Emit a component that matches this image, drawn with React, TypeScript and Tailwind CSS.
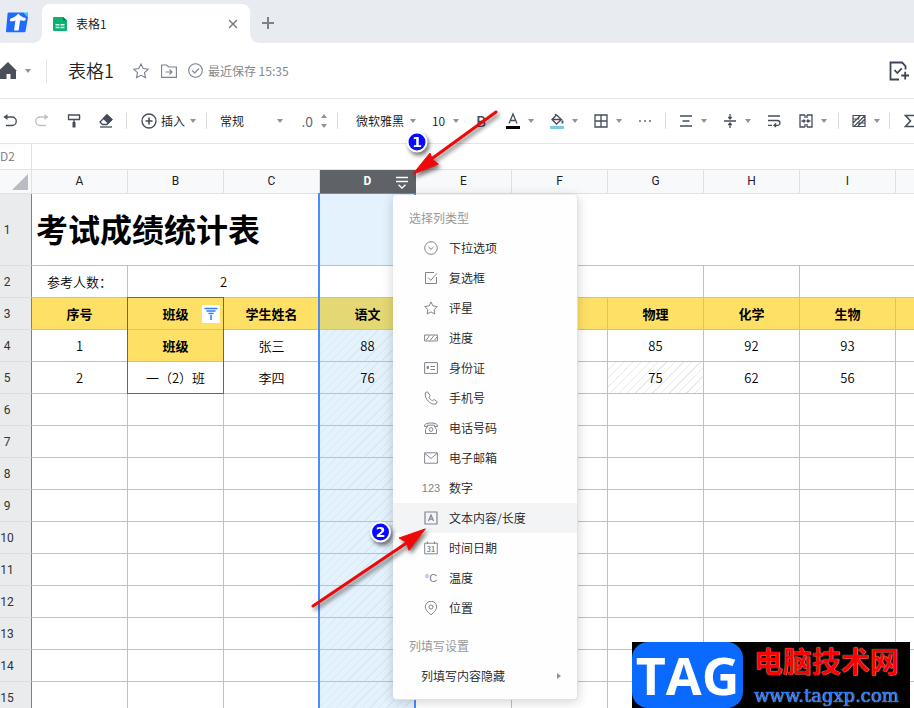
import React from "react";

const columns = ["A", "B", "C", "D", "E", "F", "G", "H", "I", ""];
const emptyRows = [6, 7, 8, 9, 10, 11, 12, 13, 14, 15];

const cell = "border-r border-b border-[#c0c0c0] p-0 text-center";
const yellow = "bg-[#ffe066] font-bold";
const hatchBlue =
  "bg-[#e4f2fd] bg-[repeating-linear-gradient(135deg,transparent_0_5px,#d9e7f1_5px_6px)]";
const hatchGray =
  "bg-[repeating-linear-gradient(135deg,transparent_0_5px,#eaeaea_5px_6px)]";

function Icon({ size = 20, className = "", children }: any) {
  return (
    <svg
      width={size}
      height={size}
      viewBox={`0 0 ${size} ${size}`}
      fill="none"
      stroke="currentColor"
      strokeWidth="1.3"
      className={`shrink-0 ${className}`}
      aria-hidden="true"
    >
      {children}
    </svg>
  );
}

function Caret() {
  return (
    <svg width="6" height="4" viewBox="0 0 6 4" className="shrink-0 fill-[#8f9296]" aria-hidden="true">
      <path d="M0 0h6L3 4z" />
    </svg>
  );
}

function Tool({ label, drop = false, className = "", children }: any) {
  return (
    <button aria-label={label} className={`flex shrink-0 items-center text-[#464d5a] ${className}`}>
      <Icon>{children}</Icon>
      {drop && (
        <span className="flex w-3 justify-end pr-px">
          <Caret />
        </span>
      )}
    </button>
  );
}

function Pick({ label, value, width }: any) {
  return (
    <label className={`relative flex shrink-0 items-center ${width}`}>
      <select aria-label={label} className="w-full appearance-none bg-transparent text-xs text-[#111]">
        <option>{value}</option>
      </select>
      <span className="pointer-events-none absolute right-0">
        <Caret />
      </span>
    </label>
  );
}

function Divider() {
  return <span className="-mx-0.5 h-4 w-px shrink-0 bg-[#d9dbde]" />;
}

/* tabs on top */
function TabBar() {
  return (
    <nav className="flex h-[43px] shrink-0 items-end bg-[#e8ebef]">
      <svg width="24" height="22" viewBox="0 0 24 22" className="mb-2.5 ml-[5px] shrink-0" aria-label="Docs">
        <path d="M3.500 1.500h15L23 6l-2.500 14.500a1 1 0 0 1-1 .8H2a1 1 0 0 1-1-1.200L2.600 2.300z" fill="#1f6bff" />
        <path d="M18.500 1.500h4.500V6z" fill="#19d2ee" />
        <path d="M13.300 2.500C11 5.500 8 7 5.200 7.800L5 10.300c2 .1 3.800-.2 5.400-.9L9 19.500h4.600l1.500-10.200c1.600.4 3.200.5 5.200.2l.4-2.400c-3-.6-5.500-2-7.400-4.600z" fill="#fff" />
      </svg>
      <div className="relative ml-[13px] flex h-[39px] w-52 items-center rounded-t-lg bg-white pr-3 pl-3">
        <span className="absolute bottom-0 -left-2 size-2 bg-[radial-gradient(circle_at_0_0,transparent_7px,white_8px)]" />
        <span className="absolute -right-2 bottom-0 size-2 bg-[radial-gradient(circle_at_100%_0,transparent_7px,white_8px)]" />
        <svg width="14" height="14" viewBox="0 0 14 14" className="-ml-px shrink-0" aria-hidden="true">
          <path d="M0 1a1 1 0 0 1 1-1h9l4 3.500V13a1 1 0 0 1-1 1H1a1 1 0 0 1-1-1z" fill="#0bb171" />
          <path d="M10 0l4 3.500h-4z" fill="#067f50" />
          <path d="M2.500 7h4v1.500h-4zM7.500 7h4v1.500h-4zM2.500 9.800h4v1.500h-4zM7.500 9.800h4v1.500h-4z" fill="#d7fbe9" />
        </svg>
        <a href="#sheet" className="ml-[9px] flex-1 text-xs text-[#111]">表格1</a>
        <button aria-label="关闭" className="text-[#6f757f]">
          <Icon size={10}>
            <path d="M1 1l8 8M9 1l-8 8" />
          </Icon>
        </button>
      </div>
      <button aria-label="新建" className="mb-3.5 ml-3 text-[#7d8087]">
        <Icon size={12}>
          <path d="M6 0v12M0 6h12" strokeWidth="2" />
        </Icon>
      </button>
    </nav>
  );
}

function TitleBar() {
  return (
    <header className="flex h-14 shrink-0 items-center border-b border-[#e4e5e8] text-[#7b828d]">
      <button aria-label="首页" className="flex items-center">
        <svg width="17" height="18" viewBox="0 0 17 18" aria-hidden="true">
          <path d="M8 0 17 9h-1v8h-5.500v-5h-4v5H0V7.500z" fill="#4a4f5a" />
        </svg>
        <span className="ml-2">
          <Caret />
        </span>
      </button>
      <span className="ml-[15px] h-6 w-px bg-[#e2e3e6]" />
      <h1 className="ml-[21px] pb-0.5 text-lg leading-6 text-[#222]">表格1</h1>
      <button aria-label="收藏" className="ml-[19px]">
        <Icon size={16}>
          <path d="M8 .9l2.200 4.700 5.100.6-3.800 3.500 1 5.100L8 12.300l-4.500 2.500 1-5.100L.7 6.200l5.100-.6z" strokeWidth="1.100" />
        </Icon>
      </button>
      <button aria-label="移动" className="ml-3">
        <Icon size={16}>
          <path d="M.6 2h5l2 2h7.800v10.400H.6zM4.500 9h6.500M8.500 6.500 11 9l-2.500 2.500" strokeWidth="1.100" />
        </Icon>
      </button>
      <Icon size={15} className="ml-[11px]">
        <circle cx="7.500" cy="7.500" r="6.800" strokeWidth="1.100" />
        <path d="M4.200 7.500l2.500 2.500 4.300-4.500" strokeWidth="1.100" />
      </Icon>
      <span className="ml-[5px] text-xs font-normal text-[#85888e]">最近保存 15:35</span>
      <button aria-label="添加任务" className="mr-[5px] ml-auto text-[#3d4455]">
        <Icon>
          <path d="M10 18.500H1.500v-17H13l3.500 3.500v3.500M5.500 9l2.800 3 4.500-4.700M12.300 14.500H20M16.200 10.700V18.500" strokeWidth="1.800" />
        </Icon>
      </button>
    </header>
  );
}

function Toolbar() {
  return (
    <div className="flex h-[45px] shrink-0 items-center gap-3 overflow-hidden border-b border-[#e4e5e8]">
      <Tool label="撤销">
        <path d="M4.500 6H12a4.200 4.200 0 0 1 0 8.500H6" />
        <path d="M3.500 6 7.500 3v6z" fill="currentColor" strokeWidth="0" />
      </Tool>
      <Tool label="重做" className="opacity-35">
        <path d="M15.500 6H8a4.200 4.200 0 0 0 0 8.500h6" />
        <path d="M16.500 6 12.500 3v6z" fill="currentColor" strokeWidth="0" />
      </Tool>
      <Tool label="格式刷">
        <path d="M4.500 4h11v4.500h-11zM10 8.500V11M15.500 6h.9" />
        <path d="M8.500 11h3v5.500h-3z" fill="currentColor" strokeWidth="0" />
      </Tool>
      <Tool label="清除格式">
        <path d="M4 11l7-7 4.800 4.500-5 5H6.500z" />
        <path d="M7.500 7.500l3.500-3.500 4.800 4.500-3.500 3.500z" fill="currentColor" />
        <path d="M4 16h12" />
      </Tool>
      <Divider />
      <button className="ml-0.5 flex shrink-0 items-center text-xs text-[#111]">
        <Icon className="text-[#464d5a]">
          <circle cx="10" cy="10" r="7" />
          <path d="M10 6.500v7M6.500 10h7" strokeWidth="1.600" />
        </Icon>
        <span className="mr-[5px] ml-0.5">插入</span>
        <Caret />
      </button>
      <Divider />
      <div className="ml-[3px] flex shrink-0">
        <Pick label="数字格式" value="常规" width="w-[63px]" />
      </div>
      <div className="flex shrink-0 items-center gap-2">
        <button className="w-[18px] text-right text-sm text-[#555b66]">.0</button>
        <button aria-label="小数位数" className="flex w-1.5 flex-col items-center gap-1.5">
          <span className="rotate-180">
            <Caret />
          </span>
          <Caret />
        </button>
      </div>
      <Divider />
      <div className="ml-2 flex shrink-0">
        <Pick label="字体" value="微软雅黑" width="w-[60px]" />
      </div>
      <div className="ml-1 flex shrink-0">
        <Pick label="字号" value="10" width="w-[27px]" />
      </div>
      <button className="w-5 shrink-0 text-[15px] font-medium text-[#464d5a]">B</button>
      <Tool label="字体颜色" drop>
        <path d="M6 12.500 10 3l4 9.500M7.300 9.500h5.400" />
        <path d="M3 16.500h14" stroke="#000" strokeWidth="3" />
      </Tool>
      <Tool label="填充颜色" drop>
        <path d="M5 8.500 9.500 4l5 4.500-5 4.500zM5 8.500h9.500M9 4.500 8 3" />
        <path d="M15.500 9.500v3" strokeWidth="1.800" />
        <path d="M3 16.500h14" stroke="#7ccbe4" strokeWidth="3" />
      </Tool>
      <Tool label="边框" drop>
        <path d="M4 4h12v12H4zM10 4v12M4 10h12" />
      </Tool>
      <Tool label="更多">
        <path d="M4 10h2M9 10h2M14 10h2" strokeWidth="2" stroke="#8a8e96" />
      </Tool>
      <Divider />
      <Tool label="水平对齐" drop>
        <path d="M4 5h12M6.500 10h7M4 15h12" strokeWidth="1.500" />
      </Tool>
      <Tool label="垂直对齐" drop>
        <path d="M4 10h12M10 3v5M8.300 6 10 8l1.700-2M10 17v-5M8.300 14 10 12l1.700 2" />
      </Tool>
      <Tool label="自动换行">
        <path d="M4 5h12M4 9.500h9.500a2.400 2.400 0 0 1 0 4.800H10M12 12.500l-2 1.800 2 1.800M4 14.300h4" />
      </Tool>
      <Tool label="合并单元格" drop>
        <path d="M9 4H4v12h5M11 4h5v12h-5M9 4v3M9 13v3M11 4v3M11 13v3M5.500 10H9M7.500 8.500 9 10l-1.500 1.500M14.500 10H11M12.500 8.500 11 10l1.500 1.500" />
      </Tool>
      <Divider />
      <Tool label="条件格式" drop>
        <path d="M4 4.500h12v11H4zM4 8h6M10 12h6M10 4.500v3M10 12v3.500M4 12l7.500-7.500M5 15.500l11-11M8.500 15.500 16 8" strokeWidth="1.200" />
      </Tool>
      <span className="-ml-1 h-4 w-px shrink-0 bg-[#d9dbde]" />
      <Tool label="求和" className="-ml-0.5">
        <path d="M15.500 6.500V4.500h-10l5 5.500-5 5.500h10v-2" strokeWidth="1.600" />
      </Tool>
    </div>
  );
}

const menuItems = [
  { name: "下拉选项", icon: <><circle cx="7" cy="7" r="6.300" /><path d="M4.500 6 7 8.300 9.500 6" /></> },
  { name: "复选框", icon: <path d="M12.500 6v6.500h-11v-11H10M4 6.500 6.800 9.300l6.200-7" /> },
  { name: "评星", icon: <path d="M7 .9l1.900 4 4.400.6-3.200 3.100.8 4.400L7 10.900 3.100 13l.8-4.400L.7 5.500l4.400-.6z" /> },
  { name: "进度", icon: <path d="M.6 4h12.800v6H.6zM2 9.500l3.500-5M6 9.500l4-5M10.500 9 13 6" /> },
  { name: "身份证", icon: <><path d="M.6 1.600h12.800v10.800H.6zM6.500 5.500h4.500M6.500 8.500h4.500" /><path d="M3 5.500h1.500v2H3z" fill="currentColor" /></> },
  { name: "手机号", icon: <path d="M3.600.8 1.400 1.700C.6 4.500 2 8 4.300 10.200 6.500 12.400 9 13.700 12 13l1.200-2.300-3-2.200-1.700 1.200C6.800 9 5.600 7.700 5 6.200l1.200-1.500z" /> },
  { name: "电话号码", icon: <><path d="M.6 5.500V4C2 1.300 12 1.300 13.400 4v1.500h-2.800V4.200H3.400v1.300zM3.400 5.500 1.500 8.500v4h11v-4l-1.900-3" /><circle cx="7" cy="8.500" r="1.900" /></> },
  { name: "电子邮箱", icon: <path d="M.6 1.800h12.800v10.400H.6zM1 2.500l6 5 6-5" /> },
  { name: "数字", text: "123" },
  { name: "文本内容/长度", icon: <path d="M1 1h12v12H1zM4.500 10 7 4l2.500 6M5.300 8.200h3.400" strokeWidth="1.200" /> },
  { name: "时间日期", icon: <><path d="M.7 2.200h12.600v10.600H.7zM3.500.5v2.500M10.500.5v2.500" /><text x="7" y="10.500" fontSize="7" fontWeight="bold" textAnchor="middle" fill="currentColor" stroke="none">31</text></> },
  { name: "温度", text: "°C" },
  { name: "位置", icon: <><path d="M7 13.800C3.500 10.800 1.300 8.500 1.300 5.900a5.700 5.700 0 0 1 11.400 0c0 2.600-2.200 4.900-5.700 7.900z" /><circle cx="7" cy="6" r="2" /></> },
];

function TypeMenu() {
  return (
    <div
      role="menu"
      className="absolute top-px left-[393px] w-[185px] rounded-sm border-r border-b border-[#e1e2e4] bg-[#fefefe] py-2 text-xs text-[#202124] shadow-[0_2px_12px_rgba(0,0,0,0.18)]"
    >
      <div className="h-[30px] pl-4 leading-[30px] font-normal text-[#999]">选择列类型</div>
      {menuItems.map((item) => (
        <button
          key={item.name}
          role="menuitem"
          className={`flex h-[30px] w-full items-center gap-[11px] pl-[31px] ${item.name === "文本内容/长度" ? "bg-[#f2f4f6]" : ""}`}
        >
          <span className="flex w-3.5 shrink-0 justify-center text-[#80858e]">
            {item.text ? (
              <span className="font-['Liberation_Sans'] text-[11px]">{item.text}</span>
            ) : (
              <svg width="14" height="14" viewBox="0 0 14 14" fill="none" stroke="currentColor" strokeWidth="1" aria-hidden="true">
                {item.icon}
              </svg>
            )}
          </span>
          {item.name}
        </button>
      ))}
      <div className="mt-2 h-[30px] pl-4 leading-[30px] font-normal text-[#999]">列填写设置</div>
      <button role="menuitem" className="flex h-[30px] w-full items-center justify-between pr-4 pl-7">
        列填写内容隐藏
        <svg width="4" height="6" viewBox="0 0 4 6" className="fill-[#8f9296]" aria-hidden="true">
          <path d="M0 0l4 3-4 3z" />
        </svg>
      </button>
    </div>
  );
}

function RowHead({ n }: { n: number }) {
  return (
    <th
      scope="row"
      className="border-r border-b border-r-[#4a86f0] border-b-[#dcdee1] bg-[#e9ebed] p-0 text-left font-[Roboto] text-xs font-normal text-[#333]"
    >
      <span className="block w-3.5 text-center">{n}</span>
    </th>
  );
}

function Sheet() {
  return (
    <table className="w-[992px] table-fixed border-separate border-spacing-0 text-[13px] text-black">
      <colgroup>
        <col className="w-8" />
        {columns.map((c) => (
          <col key={c} className="w-24" />
        ))}
      </colgroup>
      <thead>
        <tr className="h-6">
          <td className="border-r border-b border-[#dfe1e5] bg-[#f8f9fb] p-0">
            <svg width="16" height="16" viewBox="0 0 16 16" className="ml-3 fill-[#b9bcc3]" aria-hidden="true">
              <path d="M16 0v16H0z" />
            </svg>
          </td>
          {columns.map((c) => (
            <th
              key={c}
              scope="col"
              className={`relative border-r border-b p-0 pb-0.5 font-[Roboto] text-xs ${
                c === "D"
                  ? "border-[#5f6368] bg-[#5f6368] font-bold text-white"
                  : "border-[#dfe1e5] bg-[#f8f9fb] font-normal text-[#222]"
              }`}
            >
              {c}
              {c === "D" && (
                <button aria-label="列类型" className="absolute top-1 right-[5px] text-white">
                  <Icon size={16}>
                    <path d="M2 3.500h12M2 7.500h12M4.500 10.800 8 14l3.500-3.200" strokeWidth="1.400" />
                  </Icon>
                </button>
              )}
            </th>
          ))}
        </tr>
      </thead>
      <tbody>
        <tr className="h-[72px]">
          <RowHead n={1} />
          <td colSpan={3} className="border-b border-[#c0c0c0] p-0 pb-1 pl-1 text-[32px] leading-10 font-bold">
            考试成绩统计表
          </td>
          <td className={`${cell} bg-[#e4f2fd]`} />
          <td colSpan={6} className={cell} />
        </tr>
        <tr className="h-8">
          <RowHead n={2} />
          <td className={cell}>参考人数：</td>
          <td colSpan={2} className={cell}>2</td>
          <td colSpan={4} className={cell} />
          <td className={cell} />
          <td colSpan={2} className={cell} />
        </tr>
        <tr className="h-8">
          <RowHead n={3} />
          <td className={`${cell} ${yellow}`}>序号</td>
          <td className={`${cell} ${yellow} relative`}>
            班级
            <button aria-label="筛选" className="absolute top-[7px] right-[3px] bg-white text-[#2f7bf5]">
              <Icon size={18}>
                <path d="M2.500 3.500h13M4.500 6h9M6.500 8.500h5M9 10v5" strokeWidth="1.500" />
              </Icon>
            </button>
          </td>
          <td className={`${cell} ${yellow}`}>学生姓名</td>
          <td className={`${cell} bg-[#e4d874] font-bold`}>语文</td>
          <td className={`${cell} ${yellow}`} />
          <td className={`${cell} ${yellow}`} />
          <td className={`${cell} ${yellow}`}>物理</td>
          <td className={`${cell} ${yellow}`}>化学</td>
          <td className={`${cell} ${yellow}`}>生物</td>
          <td className={`${cell} ${yellow}`} />
        </tr>
        <tr className="h-8">
          <RowHead n={4} />
          <td className={cell}>1</td>
          <td className={`${cell} ${yellow}`}>班级</td>
          <td className={cell}>张三</td>
          <td className={`${cell} ${hatchBlue}`}>88</td>
          <td className={cell} />
          <td className={cell} />
          <td className={cell}>85</td>
          <td className={cell}>92</td>
          <td className={cell}>93</td>
          <td className={cell} />
        </tr>
        <tr className="h-8">
          <RowHead n={5} />
          <td className={cell}>2</td>
          <td className={cell}>一（2）班</td>
          <td className={cell}>李四</td>
          <td className={`${cell} ${hatchBlue}`}>76</td>
          <td className={cell} />
          <td className={cell} />
          <td className={`${cell} ${hatchGray}`}>75</td>
          <td className={cell}>62</td>
          <td className={cell}>56</td>
          <td className={cell} />
        </tr>
        {emptyRows.map((n) => (
          <tr key={n} className="h-8">
            <RowHead n={n} />
            {columns.map((c) => (
              <td key={c} className={`${cell} ${c === "D" ? hatchBlue : ""}`} />
            ))}
          </tr>
        ))}
      </tbody>
    </table>
  );
}

/* red arrows with the numbered steps */
function Steps() {
  return (
    <svg
      width="220"
      height="530"
      viewBox="300 100 220 530"
      className="pointer-events-none absolute top-[100px] left-[300px] drop-shadow-[2px_3px_2px_rgba(0,0,0,0.55)]"
      aria-hidden="true"
    >
      <g fill="#f00808" stroke="#f00808" strokeLinecap="round">
        <path d="M496 112 430 160" strokeWidth="3" />
        <path d="M413 174 430 153 432 159 438 164z" strokeWidth="1" strokeLinejoin="round" />
        <path d="M313 606 408 542" strokeWidth="3" />
        <path d="M425 529 399 538 406 542 409 550z" strokeWidth="1" strokeLinejoin="round" />
      </g>
      <g stroke="#fff" strokeWidth="2" fill="#0909ff">
        <circle cx="417" cy="142" r="9.500" />
        <circle cx="380.500" cy="532" r="9.500" />
      </g>
      <g fill="#fff" textAnchor="middle" className="font-['DejaVu_Sans'] text-[14px] font-bold">
        <text x="417" y="147">1</text>
        <text x="380.500" y="537">2</text>
      </g>
    </svg>
  );
}

function Watermark() {
  return (
    <a href="#tagxp" className="absolute right-1 bottom-0 flex h-[66px] w-[278px] bg-black">
      <span className="w-[111px] rounded-2xl bg-[#0a69ff] text-center font-['Open_Sans'] text-[52px] leading-[66px] font-bold text-white">
        TAG
      </span>
      <span className="flex flex-1 flex-col items-center justify-between whitespace-nowrap">
        <span className="text-[29px] leading-9 font-bold text-[#f00] [text-shadow:0_0_1px_#fff]">电脑技术网</span>
        <span className="font-['DejaVu_Serif'] text-lg leading-6 font-normal text-[#1677ff] [text-shadow:0_0_1px_#fff]">
          www.tagxp.com
        </span>
      </span>
    </a>
  );
}

export default function App() {
  return (
    <div className="relative flex h-screen flex-col overflow-hidden bg-white font-['Noto_Sans_CJK_SC',sans-serif] font-[350]">
      <TabBar />
      <TitleBar />
      <Toolbar />
      <div className="flex h-[26px] shrink-0 border-b border-[#dfe1e5] text-xs">
        <input aria-label="名称框" defaultValue="D2" className="w-8 border-r border-[#dfe1e5] pb-0.5 text-[#777]" />
        <input aria-label="编辑栏" className="min-w-0 flex-1 px-2 outline-none" />
      </div>
      <main className="relative min-h-0 flex-1 overflow-hidden">
        <Sheet />
        {/* selected column and filter range outlines */}
        <div className="pointer-events-none absolute top-[23px] -bottom-px left-[318px] w-[98px] border-x-2 border-t border-[#4a8bff]" />
        <div className="pointer-events-none absolute top-[127px] left-[127px] h-[97px] w-[97px] border border-[#2070e8]" />
        <div className="absolute top-6 left-0">
          <TypeMenu />
        </div>
      </main>
      <Steps />
      <Watermark />
    </div>
  );
}
